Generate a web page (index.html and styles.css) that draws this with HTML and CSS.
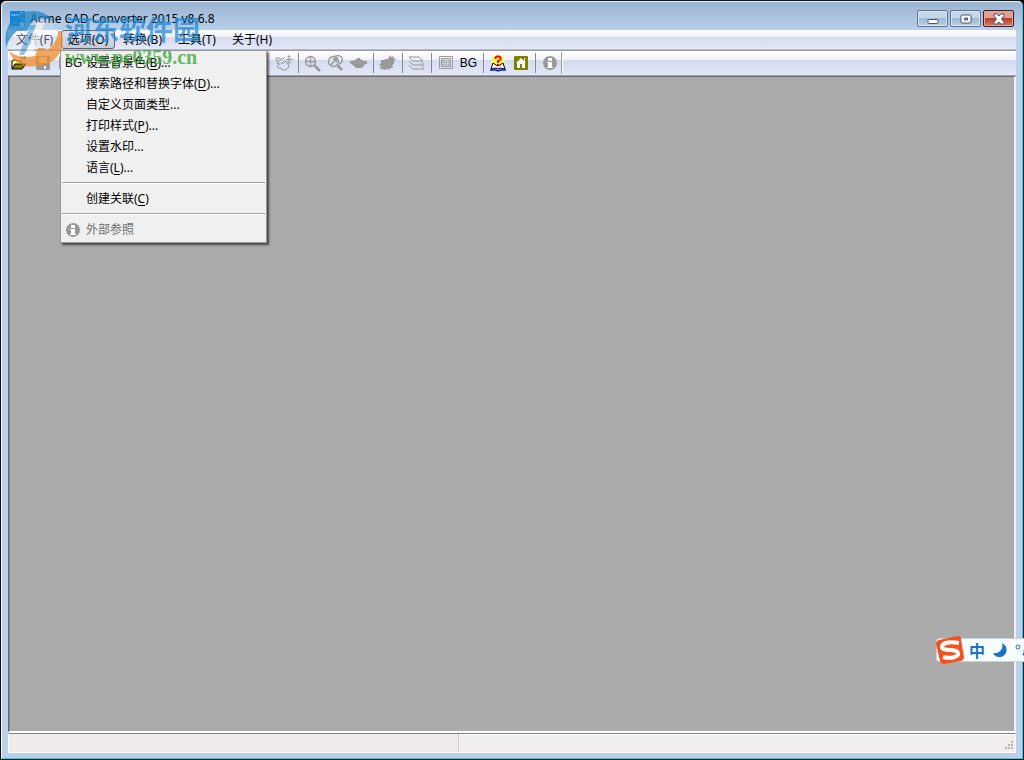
FILE: index.html
```html
<!DOCTYPE html>
<html lang="zh-CN">
<head>
<meta charset="utf-8">
<title>Acme CAD Converter 2015 v8.6.8</title>
<link rel="stylesheet" href="styles.css">
</head>
<body>
<div class="window">
  <header class="titlebar">
    <svg class="app-icon" width="16" height="16" viewBox="0 0 16 16"><path fill="#1283dc" d="M0 0h15v15H0z"/><path d="M1 4h9l2-3M9 6l5 4M2 13l5-2" stroke="#8fd0ff" fill="none"/><path fill="#fff" d="M12 10l1 2h2l-1 2v2l-2-1-2 1v-2l-1-2h2z"/></svg>
    <h1 class="title">Acme CAD Converter 2015 v8.6.8</h1>
    <div class="controls">
      <button class="control" aria-label="最小化"><svg width="12" height="12" viewBox="0 0 12 12"><rect x="1" y="6.500" width="10" height="4" rx="1" fill="#fff" stroke="#4c5564"/></svg></button>
      <button class="control" aria-label="最大化"><svg width="12" height="12" viewBox="0 0 12 12"><rect x="1" y="2" width="10" height="8" rx="1" fill="#fff" stroke="#4c5564"/><path fill="#8ba8c8" stroke="#4c5564" d="M4.500 5h3v2h-3z"/></svg></button>
      <button class="control close" aria-label="关闭"><svg width="14" height="12" viewBox="0 0 14 12"><path d="M2 1h3l2 2 2-2h3v2L9.500 6l2.500 3v2H9L7 9l-2 2H2V9l2.500-3L2 3z" fill="#fff" stroke="#53566a"/></svg></button>
    </div>
  </header>
  <nav class="menubar">
    <button class="menu-title file">文件(F)</button>
    <div class="menu-open">
      <button class="menu-title active">选项(O)</button>
      <div class="dropdown">
        <button class="item"><span class="mark bg">BG</span>设置背景色(<u>B</u>)...</button>
        <button class="item"><span class="mark"></span>搜索路径和替换字体(<u>D</u>)...</button>
        <button class="item"><span class="mark"></span>自定义页面类型...</button>
        <button class="item"><span class="mark"></span>打印样式(<u>P</u>)...</button>
        <button class="item"><span class="mark"></span>设置水印...</button>
        <button class="item"><span class="mark"></span>语言(<u>L</u>)...</button>
        <hr class="rule">
        <button class="item"><span class="mark"></span>创建关联(<u>C</u>)</button>
        <hr class="rule">
        <button class="item disabled" disabled><span class="mark"><svg width="16" height="16" viewBox="0 0 16 16"><circle cx="8" cy="8" r="7" fill="#999"/><path fill="#fff" d="M6 3h4v3H6zM5 7h5v5h1v1H5v-1h1V8H5z"/></svg></span>外部参照</button>
      </div>
    </div>
    <button class="menu-title">转换(B)</button>
    <button class="menu-title">工具(T)</button>
    <button class="menu-title">关于(H)</button>
  </nav>
  <div class="toolbar">
    <button class="tool" aria-label="打开"><svg width="17" height="16" viewBox="0 0 17 16"><path d="M1 14V6l1-1h3l1 1h4v3" fill="#ffff8c" stroke="#000"/><path d="M1 14l3-5h11l-4 5z" fill="#808000" stroke="#000"/><path d="M9 3q3-2 5 1M14 1v3h-3" fill="none" stroke="#555"/></svg></button>
    <button class="tool" aria-label="保存" disabled><svg width="16" height="16" viewBox="0 0 16 16"><path fill="#999" d="M1 1h14v14H2l-1-1z"/><path fill="#eef0fa" d="M4 2h8v6H4zM9 11h2v3H9z"/></svg></button>
    <button class="tool" aria-label="打印" disabled><svg width="16" height="16" viewBox="0 0 16 16"><path fill="#999" d="M1 2h14v12H1z"/><path fill="#eef0fa" d="M4 4h8v3H4z"/></svg></button>
    <span class="covered"></span>
    <button class="tool" aria-label="平移" disabled><svg width="18" height="16" viewBox="0 0 18 16"><g fill="none" stroke="#999"><path d="M1 3h3l1 1h3l2-2M1 3v2l2 1 3-1M3 6L2 8l3 1-3 2 1 2h3l1 2h5M6 9l4-2M9 5l4 4 1 3-3 2"/><path d="M14 1v7M11 4.500h7M12.500 2.500l1.500-2 1.500 2M12.500 6.500l1.500 2 1.500-2"/></g></svg></button>
    <span class="sep"></span>
    <button class="tool" aria-label="放大" disabled><svg width="17" height="17" viewBox="0 0 17 17"><g fill="none" stroke="#999" stroke-width="1.300"><circle cx="6.500" cy="6.500" r="5"/><path d="M6.500 1v11M1 6.500h11"/><path stroke-width="2.500" d="M10 10l6 6"/></g></svg></button>
    <button class="tool" aria-label="窗口缩放" disabled><svg width="17" height="17" viewBox="0 0 17 17"><g fill="none" stroke="#999" stroke-width="1.300"><circle cx="6.500" cy="6.500" r="5"/><path d="M8 1l4-.5 3 2v4l-3 3"/><path stroke-width="2.500" d="M10 10l5 5"/></g><path fill="#999" d="M5 3h5v5L8 6l-4 5-1-1 4-5z"/></svg></button>
    <button class="tool" aria-label="渲染" disabled><svg width="18" height="14" viewBox="0 0 18 14"><path fill="#999" d="M7 2h3v1l4 2 3 0v3h-2l-2 3-2 1H6l-3-3-3-2V5l4-.500 3-1.500z"/></svg></button>
    <span class="sep"></span>
    <button class="tool" aria-label="重生成" disabled><svg width="17" height="17" viewBox="0 0 17 17"><path fill="#999" d="M2 5l3 0 2-1 2 0 2-4 1 2 3-1-1 2 3 1-2 2 0 3-2 1 1 3-3 0-1 2-2-1-3 1-1-1-3 0 1-3-2-1 2-2z"/></svg></button>
    <span class="sep"></span>
    <button class="tool" aria-label="图层" disabled><svg width="18" height="16" viewBox="0 0 18 16"><path d="M1 2h10l4 4H5zM1 6l4 4h11l-2-3M1 10l4 4h11l-2-3" fill="none" stroke="#999"/></svg></button>
    <span class="sep"></span>
    <button class="tool" aria-label="栅格" disabled><svg width="16" height="16" viewBox="0 0 16 16"><path d="M1.500 1.500h13v12h-13z" fill="none" stroke="#999"/><path d="M3.500 3.500h9v8h-9z" fill="#aaa5" stroke="#999"/><path d="M4 5.500h8M4 7.500h8M4 9.500h8" stroke="#999" stroke-dasharray="1 1"/></svg></button>
    <button class="tool bg">BG</button>
    <span class="sep"></span>
    <button class="tool" aria-label="帮助"><svg width="18" height="17" viewBox="0 0 18 17"><path fill="#ffff45" d="M9 0l2 1 4 0-1 3 2 3-2 3H4L2 7l2-3-1-3h4z"/><path d="M2 14l2-6 3 2 2 1 2-1 3-2 2 6-5-1-2 1-2-1z" fill="#fffff0" stroke="#000"/><path d="M1 15h6l2 1 2-1h6" fill="none" stroke="#0018e0" stroke-width="1.500"/><path d="M6.500 4V2.500l1.500-1h2l1.500 1v2L9 6v2M9 9v2" fill="none" stroke="#f00018" stroke-width="2"/></svg></button>
    <button class="tool" aria-label="主页"><svg width="16" height="16" viewBox="0 0 16 16"><rect x="1" y="1" width="14" height="14" rx="1" fill="#808000"/><path fill="#fff" d="M8 3l5 5h-1v5H9V9H7v4H4V8H3zM11 3h1v4h-1z"/></svg></button>
    <span class="sep"></span>
    <button class="tool" aria-label="外部参照" disabled><svg width="16" height="16" viewBox="0 0 16 16"><circle cx="8" cy="8" r="7" fill="#999"/><path fill="#fff" d="M6 3h4v3H6zM5 7h5v5h1v1H5v-1h1V8H5z"/></svg></button>
    <span class="toolbar-end"></span>
  </div>
  <main class="canvas"></main>
  <footer class="status">
    <span class="pane first"></span>
    <span class="pane"></span>
    <svg class="grip" width="12" height="12" viewBox="0 0 12 12"><path fill="#b8b4b4" d="M8 1h2v2H8zM5 4h2v2H5zM8 4h2v2H8zM2 7h2v2H2zM5 7h2v2H5zM8 7h2v2H8z"/></svg>
  </footer>
</div>
<div class="watermark">
  <svg class="wm-logo" width="60" height="60" viewBox="0 0 60 60">
    <circle cx="29" cy="30" r="25" fill="#fff" opacity=".2"/>
    <path fill="#2385c8" d="M2 38C-1 16 11 2 29 2c9 0 16 4 20 10-10-4-16-3-22 2l-4 8H13C8 26 4 32 2 38z"/>
    <path fill="#2385c8" d="M26 16h7l-8 21-5 9h-5z" opacity=".6"/>
    <path fill="#fff" d="M33 13h8l-6 15-7 18h-7z" opacity=".8"/>
    <path fill="#f08a2c" d="M5 42c7 6 17 7 26 5l3-8h8l-2 4c8-4 14-12 14-21h3c6 16-4 34-23 35C20 59 9 54 5 42z"/>
  </svg>
  <div>
    <div class="wm-name">河东软件园</div>
    <div class="wm-url">www.pc0359.cn</div>
  </div>
</div>
<div class="ime">
  <svg class="ime-logo" width="30" height="30" viewBox="0 0 30 30"><path fill="#f4511e" d="M4 5l19-4q3 0 3 3l3 18q0 3-3 4L9 29q-3 0-4-3L1 9q0-3 3-4z"/><path d="M24 8C14 6 7 8 7 12c0 5 15 1 16 6 1 4-7 6-15 4" fill="none" stroke="#fff" stroke-width="4"/></svg>
  <span class="ime-mode">中</span>
  <svg width="14" height="14" viewBox="0 0 14 14"><path fill="#1b73c8" d="M9 0c7 3 6 14-3 14-3 0-5-2-6-4 6 1 11-4 9-10z"/></svg>
  <svg width="10" height="14" viewBox="0 0 10 14"><circle cx="3" cy="4" r="2" fill="none" stroke="#1b73c8"/><path d="M9 7q2 2-1 5" fill="none" stroke="#1b73c8" stroke-width="2"/></svg>
</div>
</body>
</html>
```
FILE: styles.css
```css
* { box-sizing: border-box; }
body {
  margin: 0;
  height: 100vh;
  overflow: hidden;
  position: relative;
  background: #000;
  font: 12px/20px "Noto Sans", "Noto Sans CJK SC", sans-serif;
  color: #000;
}
button {
  margin: 0;
  padding: 0;
  border: 0;
  background: none;
  font: inherit;
  color: inherit;
}
.window {
  height: 100%;
  display: flex;
  flex-direction: column;
  padding: 0 6px 6px;
  background: #b9d1ea;
  border: 1px solid #111;
  border-radius: 6px 6px 0 0;
  box-shadow: inset 1px 1px #f4faff, inset -1px -1px #28d0f0;
}
.titlebar {
  height: 29px;
  flex: none;
  display: flex;
  align-items: center;
  gap: 4px;
  margin: 0 -5px;
  padding: 5px 8px 0;
  background: linear-gradient(#99b4d1, #b9d1ea);
  border-top: 1px solid #e4eef8;
  border-radius: 5px 5px 0 0;
}
.title { flex: 1; margin: 0; font-size: 12px; font-weight: 400; }
.app-icon { flex: none; }
.controls { display: flex; gap: 2px; }
.control {
  width: 31px;
  height: 17px;
  display: flex;
  align-items: center;
  justify-content: center;
  border: 1px solid #5d7590;
  border-radius: 2px;
  background: linear-gradient(#c5d7ea 50%, #9db9d7 50%, #bad1e8);
  box-shadow: inset 0 0 0 1px #d8e6f4;
}
.close {
  border-color: #431820;
  background: linear-gradient(#e0a093 50%, #b93d26 50%, #d67a62);
  box-shadow: inset 0 0 0 1px #e5a99c;
}
.menubar, .toolbar {
  flex: none;
  display: flex;
  margin: 0 1px;
  background: linear-gradient(#fff, #f0f3fa 36%, #d5dbee 37%, #e2e8f7);
}
.menubar { height: 20px; border-bottom: 1px solid #b6bccc; }
.menu-title { height: 19px; padding: 0 8px; white-space: nowrap; }
.file { width: 53px; padding: 0; color: #333; }
.menu-open { position: relative; }
.active {
  width: 54px;
  padding: 0 4px;
  border: 1px solid #5e626c;
  border-radius: 3px;
  background: linear-gradient(#d9deea, #c6ccdc);
  line-height: 18px;
}
.dropdown {
  position: absolute;
  z-index: 2;
  top: 20px;
  left: -1px;
  width: 207px;
  padding: 1px 1px 2px;
  display: flex;
  flex-direction: column;
  background: #f0f0f0;
  border: 1px solid #979797;
  box-shadow: 2px 2px 2px #0009;
}
.item { height: 21px; display: flex; align-items: center; text-align: left; white-space: nowrap; }
.item u { text-underline-offset: 2px; }
.mark { width: 24px; height: 16px; flex: none; padding-left: 3px; line-height: 16px; }
.bg { font-family: "Liberation Sans", sans-serif; font-size: 12px; }
.disabled { color: #6d6d6d; }
.rule { width: 100%; height: 2px; margin: 4px 0; border: 0; border-top: 1px solid #a0a0a0; background: #fff; }
.toolbar {
  height: 26px;
  align-items: center;
  border-top: 1px solid #9c9c9c;
  border-bottom: 1px solid #a0a4b0;
  box-shadow: inset 0 1px #fff;
}
.tool { width: 23px; height: 22px; flex: none; display: flex; align-items: center; justify-content: center; }
.toolbar .bg { font-size: 12px; }
.covered { width: 195px; flex: none; }
.sep { width: 6px; height: 20px; flex: none; display: flex; justify-content: center; }
.sep::before { content: ""; width: 1px; background: #858991; }
.toolbar-end { width: 2px; height: 22px; border-left: 1px solid #999; border-right: 1px solid #fff; }
.canvas {
  flex: 1;
  margin: 0 1px;
  background: #ababab;
  border: 1px solid #696969;
  border-right: 2px solid #f0f0f0;
  border-bottom: 2px solid #fff;
  box-shadow: inset 1px 0 #8a8a8a;
}
.status {
  flex: none;
  height: 20px;
  display: flex;
  margin: 0 1px;
  background: #f0eeee;
  border: 1px solid #fff;
  border-top-color: #808080;
  box-shadow: inset 0 1px #fff;
}
.pane { flex: 1; }
.first { flex: 0 0 450px; border-right: 1px solid #d4d0d0; background: #f0ecec; }
.grip { align-self: flex-end; }
.watermark {
  position: absolute;
  z-index: 3;
  top: 9px;
  left: 4px;
  display: flex;
  gap: 1px;
  opacity: 0.75;
  pointer-events: none;
}
.wm-name { margin-top: 4px; font: 700 27px/32px "Noto Sans CJK SC", sans-serif; color: #2589d8; white-space: nowrap; }
.wm-url { font: 700 20px/24px "Liberation Serif", serif; color: #35a535; }
.ime {
  position: absolute;
  z-index: 4;
  right: 0;
  top: 638px;
  height: 24px;
  width: 88px;
  display: flex;
  align-items: center;
  gap: 8px;
  background: #fafdff;
  border: 1px solid #c4d2dc;
  border-right: 0;
  border-radius: 4px 0 0 4px;
}
.ime svg { flex: none; }
.ime-logo { margin: 0 -4px 0 -2px; }
.ime-mode { font: 700 16px/22px "Noto Sans CJK SC", sans-serif; color: #1b73c8; }
```
